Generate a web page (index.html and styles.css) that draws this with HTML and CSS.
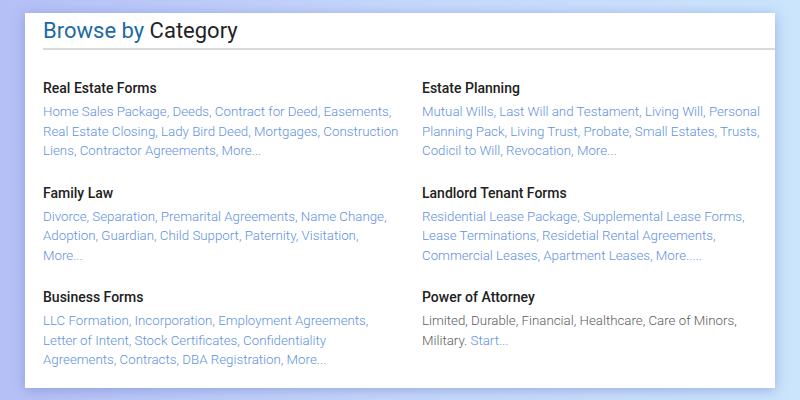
FILE: index.html
```html
<!DOCTYPE html>
<html>
  <head>
    <link rel="stylesheet" href="styles.css">
  </head>
  <body>
    <div class="card">
      <h2 class="title"><span class="accent">Browse by</span> Category</h2>
      <div class="grid">
        <div class="block">
          <h3>Real Estate Forms</h3>
          <p>
            <a href="#">Home Sales Package</a>, <a href="#">Deeds</a>, <a href="#">Contract for Deed</a>, <a href="#">Easements</a>,
            <a href="#">Real Estate Closing</a>, <a href="#">Lady Bird Deed</a>, <a href="#">Mortgages</a>, <a href="#">Construction Liens</a>,
            <a href="#">Contractor Agreements</a>, <a href="#">More...</a>
          </p>
        </div>
        <div class="block">
          <h3>Estate Planning</h3>
          <p>
            <a href="#">Mutual Wills</a>, <a href="#">Last Will and Testament</a>, <a href="#">Living Will</a>, <a href="#">Personal Planning Pack</a>,
            <a href="#">Living Trust</a>, <a href="#">Probate</a>, <a href="#">Small Estates</a>, <a href="#">Trusts</a>,
            <a href="#">Codicil to Will</a>, <a href="#">Revocation</a>, <a href="#">More...</a>
          </p>
        </div>
        <div class="block">
          <h3>Family Law</h3>
          <p>
            <a href="#">Divorce</a>, <a href="#">Separation</a>, <a href="#">Premarital Agreements</a>, <a href="#">Name Change</a>,
            <a href="#">Adoption</a>, <a href="#">Guardian</a>, <a href="#">Child Support</a>, <a href="#">Paternity</a>, <a href="#">Visitation</a>,
            <a href="#">More...</a>
          </p>
        </div>
        <div class="block">
          <h3>Landlord Tenant Forms</h3>
          <p>
            <a href="#">Residential Lease Package</a>, <a href="#">Supplemental Lease Forms</a>,
            <a href="#">Lease Terminations</a>, <a href="#">Residetial Rental Agreements</a>,
            <a href="#">Commercial Leases</a>, <a href="#">Apartment Leases</a>, <a href="#">More.....</a>
          </p>
        </div>
        <div class="block">
          <h3>Business Forms</h3>
          <p>
            <a href="#">LLC Formation</a>, <a href="#">Incorporation</a>, <a href="#">Employment Agreements</a>,
            <a href="#">Letter of Intent</a>, <a href="#">Stock Certificates</a>, <a href="#">Confidentiality Agreements</a>,
            <a href="#">Contracts</a>, <a href="#">DBA Registration</a>, <a href="#">More...</a>
          </p>
        </div>
        <div class="block">
          <h3>Power of Attorney</h3>
          <p class="plain">
            Limited, Durable, Financial, Healthcare, Care of Minors,
            Military. <a href="#">Start...</a>
          </p>
        </div>
      </div>
    </div>
  </body>
</html>
```

FILE: styles.css
```css
html, body {
  margin: 0;
  padding: 0;
}

body {
  height: 400px;
  overflow: hidden;
  background: linear-gradient(to right, #b5c0f6, #c6d8fb 50%, #cbe5fc);
  font-family: Roboto, "Liberation Sans", sans-serif;
  padding-top: 13px;
  box-sizing: border-box;
}

.card {
  background: #fff;
  margin: 0 25px;
  height: 375px;
  box-sizing: border-box;
  padding-left: 18px;
  box-shadow: 0 2px 12px rgba(90, 110, 190, 0.45);
}

.title {
  margin: 0;
  padding-top: 3px;
  height: 32px;
  font-size: 22px;
  font-weight: 400;
  line-height: 30px;
  color: #232323;
  border-bottom: 2px solid #d9d9d9;
}

.accent {
  color: #1b6aa5;
}

.grid {
  display: grid;
  grid-template-columns: 379px 346px;
  padding-top: 28px;
}

.block {
  height: 104.5px;
}

h3 {
  margin: 0 0 4px;
  font-size: 14px;
  font-weight: 500;
  line-height: 20px;
  color: #212121;
}

p {
  margin: 0;
  max-width: 358px;
  font-size: 13.3px;
  font-weight: 300;
  line-height: 19.5px;
  color: #5f92e0;
}

a {
  color: #5f92e0;
  text-decoration: none;
}

.plain {
  color: #5e5e5e;
}
```
